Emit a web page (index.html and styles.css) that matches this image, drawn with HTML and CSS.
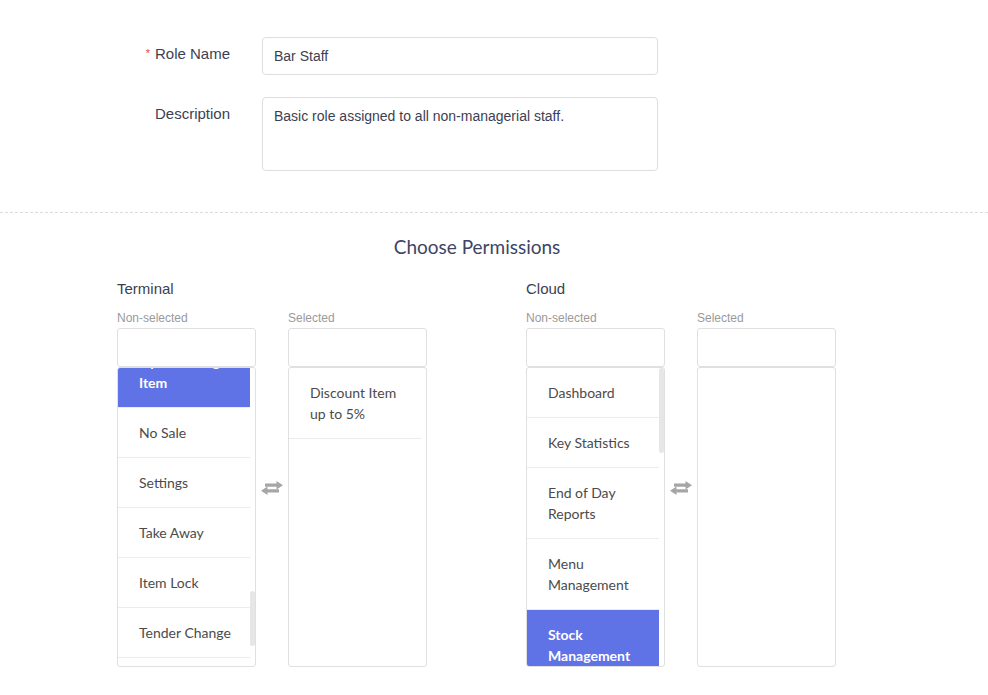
FILE: index.html
```html
<!DOCTYPE html>
<html lang="en">
<head>
    <meta charset="utf-8">
    <title>Edit Role</title>
    <link rel="stylesheet" href="styles.css">
</head>
<body>
    <!-- Role details -->
    <div class="role-form">
        <div class="form-row">
            <label class="form-label required" for="role-name">Role Name</label>
            <input class="form-input" id="role-name" type="text" value="Bar Staff">
        </div>
        <div class="form-row">
            <label class="form-label" for="role-desc">Description</label>
            <textarea class="form-input form-textarea" id="role-desc">Basic role assigned to all non-managerial staff.</textarea>
        </div>
    </div>

    <!-- Permissions -->
    <div class="permissions">
        <h2>Choose Permissions</h2>
        <div class="groups">
            <div class="group">
                <h3>Terminal</h3>
                <div class="dual-list">
                    <div class="list-col">
                        <div class="list-caption">Non-selected</div>
                        <input class="list-filter" type="text">
                        <div class="list-box">
                            <ul class="list-items scrolled">
                                <li class="active">Open Pricing Item</li>
                                <li>No Sale</li>
                                <li>Settings</li>
                                <li>Take Away</li>
                                <li>Item Lock</li>
                                <li>Tender Change</li>
                                <li>Void Item</li>
                            </ul>
                            <span class="scroll-thumb thumb-low"></span>
                        </div>
                    </div>
                    <div class="swap">
                        <svg width="22" height="14" viewBox="0 0 22 14">
                            <path d="M4 2.6h11.5V0L22 4.2l-6.5 4.2V5.8H4z" fill="#a6a6a6"/>
                            <path d="M18 8.2H6.5V5.6L0 9.8 6.5 14v-2.6H18z" fill="#a6a6a6"/>
                        </svg>
                    </div>
                    <div class="list-col">
                        <div class="list-caption">Selected</div>
                        <input class="list-filter" type="text">
                        <div class="list-box">
                            <ul class="list-items">
                                <li>Discount Item up to 5%</li>
                            </ul>
                        </div>
                    </div>
                </div>
            </div>

            <div class="group">
                <h3>Cloud</h3>
                <div class="dual-list">
                    <div class="list-col">
                        <div class="list-caption">Non-selected</div>
                        <input class="list-filter" type="text">
                        <div class="list-box">
                            <ul class="list-items">
                                <li>Dashboard</li>
                                <li>Key Statistics</li>
                                <li>End of Day Reports</li>
                                <li>Menu Management</li>
                                <li class="active">Stock Management</li>
                                <li>Staff Management</li>
                            </ul>
                            <span class="scroll-thumb thumb-top"></span>
                        </div>
                    </div>
                    <div class="swap">
                        <svg width="22" height="14" viewBox="0 0 22 14">
                            <path d="M4 2.6h11.5V0L22 4.2l-6.5 4.2V5.8H4z" fill="#a6a6a6"/>
                            <path d="M18 8.2H6.5V5.6L0 9.8 6.5 14v-2.6H18z" fill="#a6a6a6"/>
                        </svg>
                    </div>
                    <div class="list-col">
                        <div class="list-caption">Selected</div>
                        <input class="list-filter" type="text">
                        <div class="list-box">
                            <ul class="list-items"></ul>
                        </div>
                    </div>
                </div>
            </div>
        </div>
    </div>
</body>
</html>
```

FILE: styles.css
```css
/* Reset */
* {
    margin: 0;
    padding: 0;
    box-sizing: border-box;
}

body {
    font-family: 'Liberation Sans', Arial, sans-serif;
    background: #fff;
    color: #3c3f52;
    overflow: hidden;
}

/* Role form */
.role-form {
    padding: 37px 0 41px;
    border-bottom: 1px dashed #dcdcdc;
}

.form-row {
    display: flex;
    align-items: flex-start;
    gap: 32px;
    margin-bottom: 22px;
}

.form-row:last-child {
    margin-bottom: 0;
}

.form-label {
    width: 230px;
    text-align: right;
    font-size: 15px;
    line-height: 22px;
    padding-top: 5px;
    color: #3c3f52;
}

.form-textarea + .form-label,
.form-row:last-child .form-label {
    padding-top: 6px;
}

.form-label.required::before {
    content: '*';
    color: #e0474c;
    font-size: 11px;
    margin-right: 5px;
    vertical-align: 2px;
}

.form-input {
    width: 396px;
    height: 38px;
    padding: 0 11px;
    border: 1px solid #dedede;
    border-radius: 4px;
    font-family: 'Liberation Sans', Arial, sans-serif;
    font-size: 14px;
    color: #3c3f52;
    background: #fff;
    outline: none;
}

.form-textarea {
    height: 74px;
    padding: 8px 11px;
    line-height: 20px;
    resize: none;
    overflow: hidden;
}

/* Permissions */
.permissions {
    width: 720px;
    margin-left: 117px;
}

.permissions h2 {
    font-family: Lato, 'Open Sans', sans-serif;
    font-weight: 400;
    font-size: 19px;
    line-height: 24px;
    text-align: center;
    color: #3f4463;
    margin-top: 22px;
    margin-bottom: 21px;
}

.groups {
    display: flex;
    gap: 99px;
}

.group h3 {
    font-weight: 400;
    font-size: 15px;
    line-height: 18px;
    color: #3c3f52;
    margin-bottom: 13px;
}

.dual-list {
    display: flex;
}

.list-col {
    width: 139px;
}

.list-caption {
    font-size: 12px;
    line-height: 15px;
    color: #9a9a9a;
    margin-bottom: 2px;
}

.list-filter {
    display: block;
    width: 100%;
    height: 39px;
    border: 1px solid #e0e0e0;
    border-radius: 3px;
    outline: none;
    background: #fff;
}

.list-box {
    position: relative;
    height: 300px;
    border: 1px solid #e0e0e0;
    border-radius: 3px;
    overflow: hidden;
}

.list-items {
    list-style: none;
    margin-right: 5px;
}

/* list is shown scrolled down a little */
.list-items.scrolled {
    margin-top: -31px;
}

.list-items li {
    font-family: Lato, 'Open Sans', sans-serif;
    font-size: 14px;
    line-height: 21px;
    color: #4b4b4b;
    padding: 14px 10px 14px 21px;
    border-bottom: 1px solid #ececec;
}

.list-items li.active {
    background: #5f72e6;
    color: #fff;
    font-weight: 700;
}

.scroll-thumb {
    position: absolute;
    right: 0;
    width: 5px;
    border-radius: 3px;
    background: #e6e6e6;
}

.thumb-low {
    top: 223px;
    height: 55px;
}

.thumb-top {
    top: 0;
    height: 85px;
}

.swap {
    width: 32px;
    padding-top: 170px;
    display: flex;
    justify-content: center;
}
```
